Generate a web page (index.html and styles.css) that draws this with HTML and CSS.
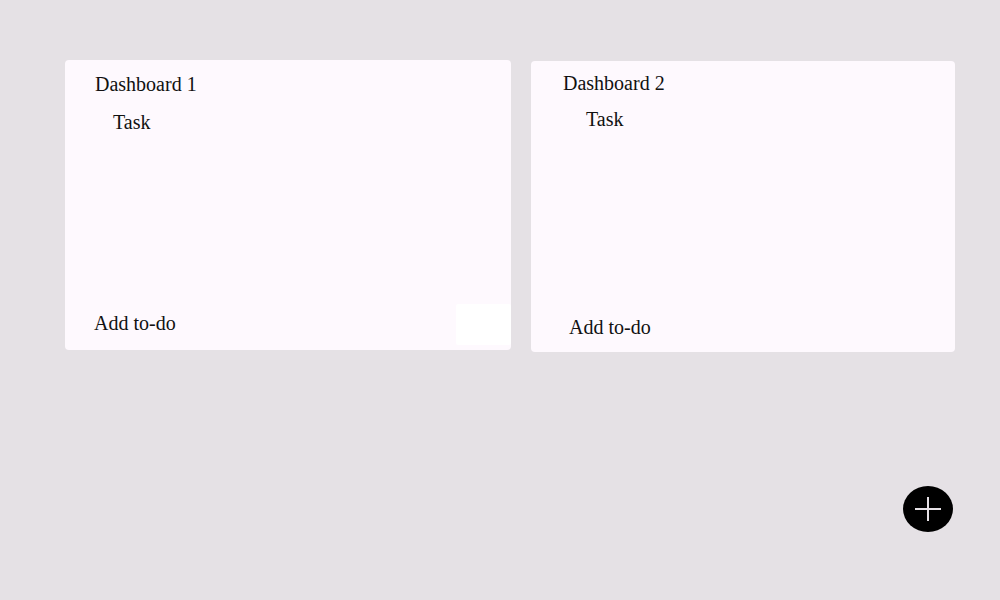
FILE: index.html
```html
<!DOCTYPE html>
<html lang="en">
<head>
<meta charset="utf-8">
<title>Dashboards</title>
<link rel="stylesheet" href="styles.css">
</head>
<body>
<main class="board">
  <section class="card card-one">
    <h2 class="card-title">Dashboard 1</h2>
    <div class="task">Task</div>
    <div class="card-footer">
      <span class="add-todo">Add to-do</span>
      <span class="footer-btn"></span>
    </div>
  </section>
  <section class="card card-two">
    <h2 class="card-title">Dashboard 2</h2>
    <div class="task">Task</div>
    <div class="card-footer">
      <span class="add-todo">Add to-do</span>
    </div>
  </section>
</main>
<button class="fab" aria-label="Add dashboard">
  <svg width="28" height="26" viewBox="0 0 28 26"><path d="M14 1v24M1 13h26" stroke="#e6e1e6" stroke-width="2" fill="none"/></svg>
</button>
</body>
</html>
```
FILE: styles.css
```css
html, body {
  margin: 0;
  padding: 0;
}
body {
  width: 1000px;
  height: 600px;
  background: #e5e1e5;
  font-family: "Liberation Serif", "Times New Roman", serif;
  color: #111;
  overflow: hidden;
}
.board {
  display: flex;
  align-items: flex-start;
  gap: 20px;
  padding: 60px 0 0 65px;
}
.card {
  background: #fef9fe;
  border-radius: 4px;
  display: flex;
  flex-direction: column;
  box-sizing: border-box;
}
.card-title {
  margin: 0;
  font-size: 20px;
  font-weight: normal;
  line-height: 23px;
}
.task {
  font-size: 20px;
  line-height: 23px;
}
.card-footer {
  margin-top: auto;
  display: flex;
  align-items: flex-end;
  justify-content: space-between;
}
.add-todo {
  font-size: 20px;
  line-height: 23px;
}
.card-one {
  width: 446px;
  height: 290px;
  padding: 13px 0 5px 0;
}
.card-one .card-title { margin-left: 30px; }
.card-one .task { margin: 15px 0 0 48px; }
.card-one .add-todo { margin: 0 0 10px 29px; }
.footer-btn {
  width: 55px;
  height: 41px;
  background: #ffffff;
  border-radius: 2px;
}
.card-two {
  width: 424px;
  height: 291px;
  margin-top: 1px;
  padding: 11px 0 13px 0;
}
.card-two .card-title { margin-left: 32px; }
.card-two .task { margin: 13px 0 0 55px; }
.card-two .add-todo { margin-left: 38px; }
.fab {
  position: fixed;
  left: 903px;
  top: 486px;
  width: 50px;
  height: 46px;
  border-radius: 50%;
  border: none;
  padding: 0;
  background: #000;
  display: flex;
  align-items: center;
  justify-content: center;
}
```
